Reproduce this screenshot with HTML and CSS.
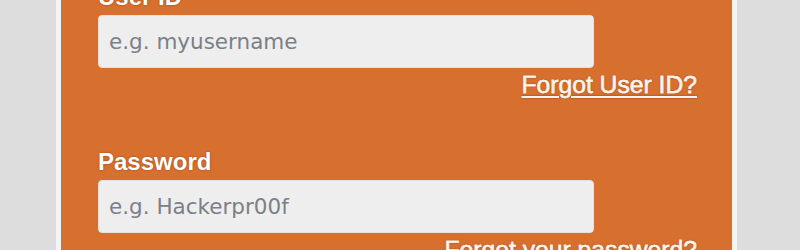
FILE: index.html
```html
<!DOCTYPE html>
<html>
<head>
<meta charset="utf-8">
<link rel="stylesheet" href="styles.css">
</head>
<body>
<div class="panel">
  <form class="login">
    <div class="field">
      <label class="label" for="uid">User ID</label>
      <input class="input" id="uid" type="text" placeholder="e.g. myusername">
      <div class="help"><a href="#" class="link">Forgot User ID?</a></div>
    </div>
    <div class="field">
      <label class="label" for="pwd">Password</label>
      <input class="input" id="pwd" type="password" placeholder="e.g. Hackerpr00f">
      <div class="help"><a href="#" class="link">Forgot your password?</a></div>
    </div>
  </form>
</div>
</body>
</html>
```
FILE: styles.css
```css
html, body {
  margin: 0;
  padding: 0;
  height: 100%;
  overflow: hidden;
}
body {
  background: #dddddd;
  font-family: "Liberation Sans", Arial, sans-serif;
}
.panel {
  margin-left: 56px;
  width: 671px;
  height: 100%;
  background: #d7702e;
  border-left: 5px solid #f4f4f4;
  border-right: 5px solid #f4f4f4;
  overflow: hidden;
}
.login {
  margin-top: -17px;
  padding: 0 35px 0 37px;
  display: flex;
  flex-direction: column;
  gap: 46px;
}
.field {
  display: flex;
  flex-direction: column;
}
.label {
  font-size: 24px;
  line-height: 28px;
  font-weight: bold;
  color: #ffffff;
  text-shadow: 0 0 2px rgba(90, 40, 10, 0.6);
  margin-bottom: 4px;
}
.input {
  box-sizing: border-box;
  width: 496px;
  height: 53px;
  margin: 0;
  padding: 0 10px;
  border: 1px solid #e4e1de;
  border-radius: 4px;
  background: #eeeeee;
  font-family: "DejaVu Sans", Verdana, sans-serif;
  font-size: 21.5px;
  color: #333;
  outline: none;
}
.input::placeholder {
  color: #7b8087;
  opacity: 1;
}
.help {
  margin-top: 3px;
  text-align: right;
  line-height: 28px;
}
.link {
  font-size: 24.7px;
  color: #fbf3ec;
  text-decoration: underline;
  text-decoration-thickness: 2px;
  text-underline-offset: 3px;
  -webkit-text-stroke: 0.4px #fbf3ec;
  text-shadow: 0 0 2px rgba(90, 40, 10, 0.6);
}
```
